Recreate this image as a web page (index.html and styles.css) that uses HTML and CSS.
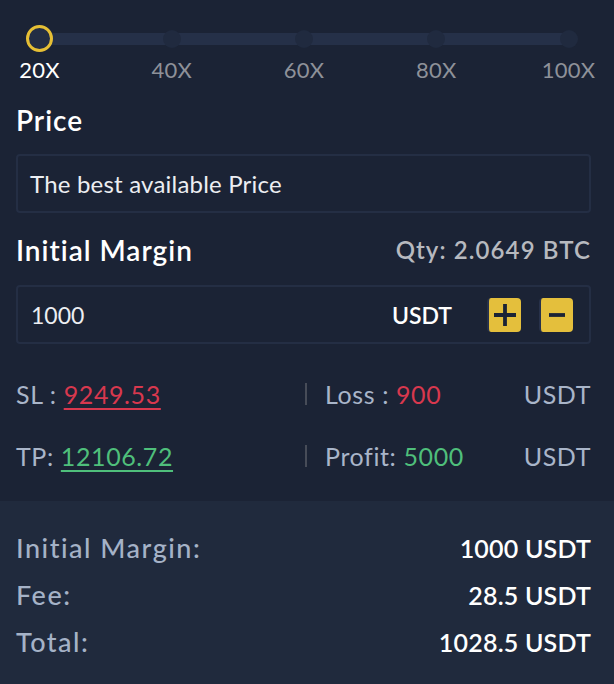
FILE: index.html
```html
<!DOCTYPE html>
<html lang="en">

<head>
    <meta charset="UTF-8">
    <meta name="viewport" content="width=device-width, initial-scale=1.0">
    <title>Open Position</title>
    <link rel="stylesheet" href="styles.css">
</head>

<body>
    <div class="panel">
        <!-- 杠杆滑块 -->
        <div class="lever">
            <div class="stops">
                <span class="stop active"><i></i></span>
                <span class="stop"><i></i></span>
                <span class="stop"><i></i></span>
                <span class="stop"><i></i></span>
                <span class="stop"><i></i></span>
            </div>
            <div class="marks">
                <span class="active">20X</span>
                <span>40X</span>
                <span>60X</span>
                <span>80X</span>
                <span>100X</span>
            </div>
        </div>

        <h3 class="title">Price</h3>
        <div class="box price">The best available Price</div>

        <div class="head">
            <h3 class="title">Initial Margin</h3>
            <span class="qty">Qty: 2.0649 BTC</span>
        </div>
        <div class="box margin">
            <span class="num">1000</span>
            <span class="unit">USDT</span>
            <a href="javascript:;" class="btn">
                <svg width="24" height="24" viewBox="0 0 24 24"><path d="M12 1v22M1 12h22" stroke="#1b2335" stroke-width="3.8"/></svg>
            </a>
            <a href="javascript:;" class="btn">
                <svg width="18" height="18" viewBox="0 0 18 18"><path d="M1 9h16" stroke="#1b2335" stroke-width="3.8"/></svg>
            </a>
        </div>

        <div class="row sl">
            <div class="cell">SL : <a href="javascript:;" class="red">9249.53</a></div>
            <div class="cell side">Loss : <span class="red">900</span></div>
            <div class="cur">USDT</div>
        </div>
        <div class="row tp">
            <div class="cell">TP: <a href="javascript:;" class="green">12106.72</a></div>
            <div class="cell side">Profit: <span class="green">5000</span></div>
            <div class="cur">USDT</div>
        </div>
    </div>

    <!-- 汇总 -->
    <div class="summary">
        <p><span>Initial Margin:</span><b>1000 USDT</b></p>
        <p><span>Fee:</span><b>28.5 USDT</b></p>
        <p><span>Total:</span><b>1028.5 USDT</b></p>
    </div>
</body>

</html>
```

FILE: styles.css
```css
* {
    margin: 0;
    padding: 0;
    box-sizing: border-box;
}

body {
    background-color: #1b2335;
    font-family: Lato, "Liberation Sans", sans-serif;
    color: #eef0f4;
}

a {
    text-decoration: none;
}

.panel {
    padding: 0 23px 0 16px;
}

/* slider */
.lever {
    width: 556px;
    margin: 25px 0 0 10px;
}

.stops,
.marks {
    display: flex;
    justify-content: space-between;
}

.stops {
    height: 27px;
    background: linear-gradient(#253048, #253048) no-repeat center / calc(100% - 27px) 12px;
}

.stop {
    width: 27px;
    height: 27px;
    display: flex;
    align-items: center;
    justify-content: center;
}

.stop i {
    width: 18px;
    height: 18px;
    border-radius: 50%;
    background-color: #202a3f;
}

.stop.active i {
    width: 27px;
    height: 27px;
    border: 3px solid #e6bf35;
    background-color: #232d44;
}

.marks {
    margin-top: 5px;
}

.marks span {
    width: 27px;
    display: flex;
    justify-content: center;
    white-space: nowrap;
    font-size: 22px;
    line-height: 26px;
    letter-spacing: 0.3px;
    color: #8e9199;
}

.marks span.active {
    color: #fff;
}

/* fields */
.title {
    font-size: 28px;
    line-height: 34px;
    font-weight: 600;
    letter-spacing: 1px;
    color: #fff;
}

.lever + .title {
    margin-top: 20px;
}

.box {
    height: 59px;
    border: 2px solid #242e44;
    border-radius: 4px;
    display: flex;
    align-items: center;
}

.price {
    margin-top: 17px;
    padding-left: 12px;
    font-size: 24px;
    letter-spacing: 0.2px;
    color: #eceef2;
}

.head {
    display: flex;
    justify-content: space-between;
    align-items: center;
    margin-top: 20px;
}

.qty {
    font-size: 24px;
    line-height: 34px;
    font-weight: 600;
    letter-spacing: 1.1px;
    color: #b7b9bf;
}

.margin {
    margin-top: 18px;
    padding: 0 16px 0 13px;
}

.margin .num {
    flex: 1;
    font-size: 23px;
    color: #eceef2;
}

.margin .unit {
    font-size: 23px;
    font-weight: 600;
    color: #fff;
    margin-right: 35px;
}

.btn {
    width: 34px;
    height: 34px;
    border-radius: 4px;
    border-left: 2px solid #27314a;
    background-color: #e4bf3c;
    display: flex;
    align-items: center;
    justify-content: center;
}

.btn + .btn {
    margin-left: 18px;
}

/* SL / TP */
.row {
    display: flex;
    align-items: center;
    height: 30px;
    font-size: 25px;
    letter-spacing: 0.6px;
    color: #a9b5c9;
}

.row.sl {
    margin-top: 35px;
}

.row.tp {
    margin-top: 32px;
}

.cell {
    width: 289px;
}

.cell.side {
    flex: 1;
    border-left: 2px solid #474c58;
    padding-left: 18px;
    height: 22px;
    line-height: 22px;
}

.cur {
    color: #a9b5c9;
}

.red {
    color: #d8384e;
}

.green {
    color: #4fbf7b;
}

a.red,
a.green {
    text-decoration: underline;
    text-underline-offset: 4px;
    text-decoration-thickness: 2px;
}

/* summary */
.summary {
    margin-top: 30px;
    background-color: #202a3d;
    padding: 23px 23px 21px 16px;
}

.summary p {
    display: flex;
    justify-content: space-between;
    align-items: center;
    height: 47px;
}

.summary span {
    font-size: 27px;
    font-weight: 500;
    letter-spacing: 1.5px;
    color: #a5b2c7;
}

.summary b {
    font-size: 25px;
    font-weight: 600;
    letter-spacing: 0.2px;
    color: #fff;
}
```
